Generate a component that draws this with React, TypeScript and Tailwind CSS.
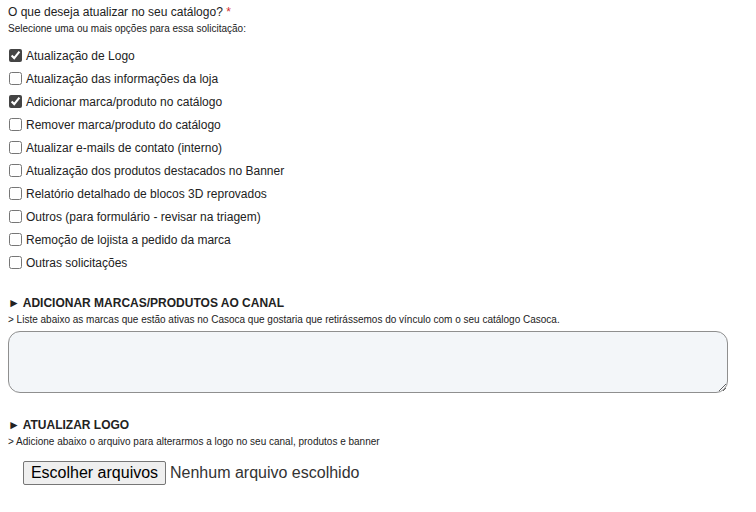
import React from "react";

const options: { label: string; checked: boolean }[] = [
  { label: "Atualização de Logo", checked: true },
  { label: "Atualização das informações da loja", checked: false },
  { label: "Adicionar marca/produto no catálogo", checked: true },
  { label: "Remover marca/produto do catálogo", checked: false },
  { label: "Atualizar e-mails de contato (interno)", checked: false },
  { label: "Atualização dos produtos destacados no Banner", checked: false },
  { label: "Relatório detalhado de blocos 3D reprovados", checked: false },
  { label: "Outros (para formulário - revisar na triagem)", checked: false },
  { label: "Remoção de lojista a pedido da marca", checked: false },
  { label: "Outras solicitações", checked: false },
];

export default function App() {
  return (
    <div
      className="w-[756px] h-[512px] bg-white text-[#222] pl-[8px] pt-[4px]"
      style={{ fontFamily: '"Liberation Sans", Arial, sans-serif' }}
    >
      <div className="text-[12px] leading-[16px]">
        O que deseja atualizar no seu catálogo? <span className="text-[#d32f2f]">*</span>
      </div>
      <div className="text-[10px] leading-[12px] mt-[3px]">
        Selecione uma ou mais opções para essa solicitação:
      </div>
      <div className="mt-[9px] flex flex-col">
        {options.map((o) => (
          <label key={o.label} className="flex items-center h-[23px] text-[12px]">
            <input
              type="checkbox"
              defaultChecked={o.checked}
              className="w-[13px] h-[13px] m-0 ml-[1px] mr-[4px] accent-[#444]"
            />
            <span>{o.label}</span>
          </label>
        ))}
      </div>

      <div className="mt-[21px] text-[12px] font-bold leading-[16px]">► ADICIONAR MARCAS/PRODUTOS AO CANAL</div>
      <div className="text-[10px] leading-[12px] mt-[3px]">
        &gt; Liste abaixo as marcas que estão ativas no Casoca que gostaria que retirássemos do vínculo com o seu catálogo Casoca.
      </div>
      <textarea className="block mt-[5px] w-[720px] h-[62px] rounded-[12px] border border-[#8f8f8f] bg-[#f3f6f9]" />

      <div className="mt-[24px] text-[12px] font-bold leading-[16px]">► ATUALIZAR LOGO</div>
      <div className="text-[10px] leading-[12px] mt-[3px]">
        &gt; Adicione abaixo o arquivo para alterarmos a logo no seu canal, produtos e banner
      </div>
      <div className="mt-[13px] ml-[15px] flex items-center text-[16px]">
        <button className="h-[24px] w-[143px] bg-[#efefef] border border-[#767676] rounded-[2px] text-black text-[16px] leading-[20px]">
          Escolher arquivos
        </button>
        <span className="ml-[4px] text-[#333]">Nenhum arquivo escolhido</span>
      </div>
    </div>
  );
}
